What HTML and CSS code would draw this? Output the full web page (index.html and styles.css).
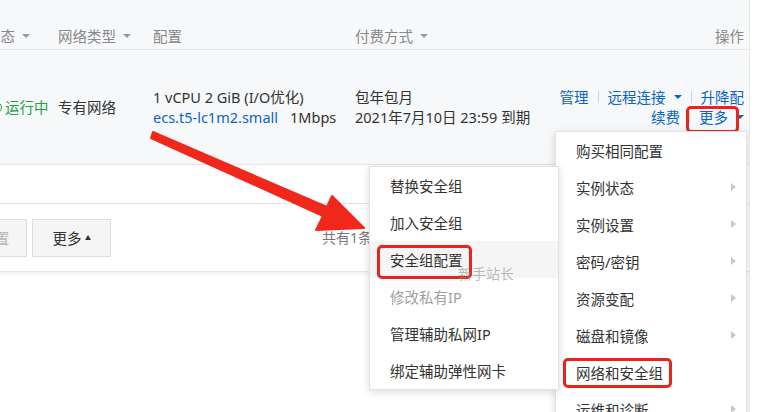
FILE: index.html
```html
<!DOCTYPE html>
<html lang="zh-CN">

<head>
    <meta charset="UTF-8">
    <meta name="viewport" content="width=device-width, initial-scale=1.0">
    <title>ECS 实例列表 - 更多操作</title>
    <link rel="stylesheet" href="styles.css">
</head>

<body>
    <div class="page">

        <!-- Instance table -->
        <div class="table">
            <div class="thead">
                <div class="col c-status">状态<i class="caret"></i></div>
                <div class="col c-net">网络类型<i class="caret"></i></div>
                <div class="col c-conf">配置</div>
                <div class="col c-pay">付费方式<i class="caret"></i></div>
                <div class="col c-ops">操作</div>
            </div>

            <div class="trow">
                <div class="col c-status"><i class="dot"></i><span class="running">运行中</span></div>
                <div class="col c-net">专有网络</div>
                <div class="col c-conf">
                    <div>1 vCPU 2 GiB (I/O优化)</div>
                    <div><a class="link">ecs.t5-lc1m2.small</a><span class="bw">1Mbps</span></div>
                </div>
                <div class="col c-pay">
                    <div>包年包月</div>
                    <div>2021年7月10日 23:59 到期</div>
                </div>
                <div class="col c-ops">
                    <div class="ops-line">
                        <a class="link">管理</a><i class="sep"></i>
                        <a class="link">远程连接</a><i class="caret blue"></i><i class="sep"></i>
                        <a class="link">升降配</a>
                    </div>
                    <div class="ops-line">
                        <a class="link">续费</a><i class="sep"></i>
                        <a class="link mark mark-more">更多</a><i class="caret blue"></i>
                    </div>
                </div>
            </div>

            <div class="tgap"></div>

            <div class="toolbar">
                <button class="btn btn-off">重置</button>
                <button class="btn">更多<i class="up"></i></button>
                <span class="total">共有1条</span>
            </div>
        </div>

        <!-- Annotation arrow -->
        <svg class="arrow" width="759" height="412" viewBox="0 0 759 412">
            <polygon points="153,132 327,207 332,196 364,228 316,230 323,216 151,138"
                fill="#f0281c" stroke="#f0281c" stroke-width="2" stroke-linejoin="round" />
        </svg>

        <!-- "更多" dropdown -->
        <ul class="menu menu-main">
            <li>购买相同配置</li>
            <li class="has-sub">实例状态</li>
            <li class="has-sub">实例设置</li>
            <li class="has-sub">密码/密钥</li>
            <li class="has-sub">资源变配</li>
            <li class="has-sub">磁盘和镜像</li>
            <li><span class="mark">网络和安全组</span></li>
            <li class="has-sub">运维和诊断</li>
        </ul>

        <!-- Network & security group submenu -->
        <ul class="menu menu-sub">
            <li>替换安全组</li>
            <li>加入安全组</li>
            <li class="hover"><span class="mark">安全组配置</span></li>
            <li class="off">修改私有IP</li>
            <li>管理辅助私网IP</li>
            <li>绑定辅助弹性网卡</li>
        </ul>

        <span class="watermark">新手站长</span>
    </div>
</body>

</html>
```

FILE: styles.css
```css
/* Colours used across the console */
:root {
    --bg-color: #FFFFFF;
    --head-bg: #f7f8fa;      /* table head + hovered row */
    --line-color: #e6e6e6;
    --text-color: #333333;
    --muted-color: #888888;
    --link-color: #0a64c8;
    --ok-color: #22a040;
    --mark-color: #e8251c;   /* red annotation boxes */
}

body {
    margin: 0;
    background: var(--bg-color);
    color: var(--text-color);
    font-family: "Noto Sans", "Noto Sans CJK SC", sans-serif;
    font-size: 14.5px;
    line-height: 20px;
}

.page {
    position: relative;
    width: 749px;
    height: 412px;
    overflow: hidden;
    border-right: 1px solid var(--line-color);
}

/* Table */
.thead,
.trow {
    display: flex;
    margin-left: -14px;
    background: var(--head-bg);
    border-bottom: 1px solid var(--line-color);
}

.thead {
    height: 50px;
    padding-top: 23px;
    box-sizing: border-box;
    color: var(--muted-color);
}

.trow {
    height: 114px;
    align-items: center;
}

.col {
    flex: none;
    display: flex;
    align-items: center;
}

.trow .c-conf,
.trow .c-pay,
.trow .c-ops {
    flex-direction: column;
    align-items: flex-start;
}

.c-status { width: 72px; }
.c-net { width: 95px; }
.c-conf { width: 202px; }
.c-pay { width: 195px; }

.c-ops {
    flex: 1;
    justify-content: flex-end;
    padding-right: 5px;
}

.trow .c-ops {
    align-items: flex-end;
}

.ops-line {
    display: flex;
    align-items: center;
}

.link {
    color: var(--link-color);
    text-decoration: none;
}

.bw {
    margin-left: 12px;
}

.running {
    color: var(--ok-color);
}

.dot {
    width: 9px;
    height: 9px;
    margin: 0 3px 0 5px;
    border: 1.5px solid var(--ok-color);
    border-radius: 50%;
}

/* Small down triangle */
.caret {
    display: inline-block;
    margin-left: 7px;
    border-top: 4px solid #999;
    border-left: 4px solid transparent;
    border-right: 4px solid transparent;
}

.caret.blue {
    border-top-color: var(--link-color);
    margin-left: 8px;
}

.sep {
    width: 1px;
    height: 12px;
    margin: 0 9px;
    background: #d4d4d4;
}

.tgap {
    height: 38px;
    border-bottom: 1px solid var(--line-color);
}

/* Toolbar under the table */
.toolbar {
    display: flex;
    align-items: center;
    height: 67px;
    border-bottom: 1px solid var(--line-color);
    box-shadow: 0 2px 4px rgba(0, 0, 0, 0.06);
}

.btn {
    display: flex;
    align-items: center;
    justify-content: center;
    width: 79px;
    height: 38px;
    margin-right: 5px;
    background: #f5f5f5;
    border: 1px solid #dedede;
    font: inherit;
    color: var(--text-color);
}

.btn-off {
    width: 64px;
    margin-left: -37px;
    color: #b5b5b5;
}

.up {
    margin-left: 3px;
    border-bottom: 5px solid #333;
    border-left: 3.5px solid transparent;
    border-right: 3.5px solid transparent;
}

.total {
    margin-left: 206px;
    font-size: 14px;
    color: #777;
}

/* Red arrow drawn over the page */
.arrow {
    position: absolute;
    top: 0;
    left: 0;
    z-index: 3;
}

/* Dropdown menus */
.menu {
    position: absolute;
    margin: 0;
    padding: 0;
    list-style: none;
    background: var(--bg-color);
    border: 1px solid #e3e3e3;
    box-shadow: 0 2px 8px rgba(0, 0, 0, 0.15);
}

.menu li {
    position: relative;
    display: flex;
    align-items: center;
    height: 37px;
    padding: 0 20px;
}

.menu-main {
    top: 131px;
    left: 555px;
    width: 190px;
    z-index: 1;
}

.menu-sub {
    top: 166px;
    left: 369px;
    width: 188px;
    z-index: 2;
}

.menu li.hover {
    background: #f5f5f5;
}

.menu li.off {
    color: #a0a0a0;
}

.has-sub::after {
    content: "";
    position: absolute;
    right: 10px;
    top: 14px;
    border-left: 5px solid #c8c8c8;
    border-top: 4.5px solid transparent;
    border-bottom: 4.5px solid transparent;
}

/* Red annotation boxes */
.mark {
    position: relative;
}

.mark::after {
    content: "";
    position: absolute;
    top: -5px;
    bottom: -5px;
    left: -13px;
    right: -9px;
    border: 3px solid var(--mark-color);
    border-radius: 5px;
}

.menu-sub .mark::after {
    bottom: -9px;
}

.mark-more::after {
    top: -1px;
    bottom: -6px;
    left: -13px;
    right: -11px;
}

.watermark {
    position: absolute;
    left: 458px;
    top: 263px;
    z-index: 4;
    color: rgba(140, 140, 140, 0.6);
    font-family: "Noto Sans CJK SC", sans-serif;
    font-size: 14px;
}
```
